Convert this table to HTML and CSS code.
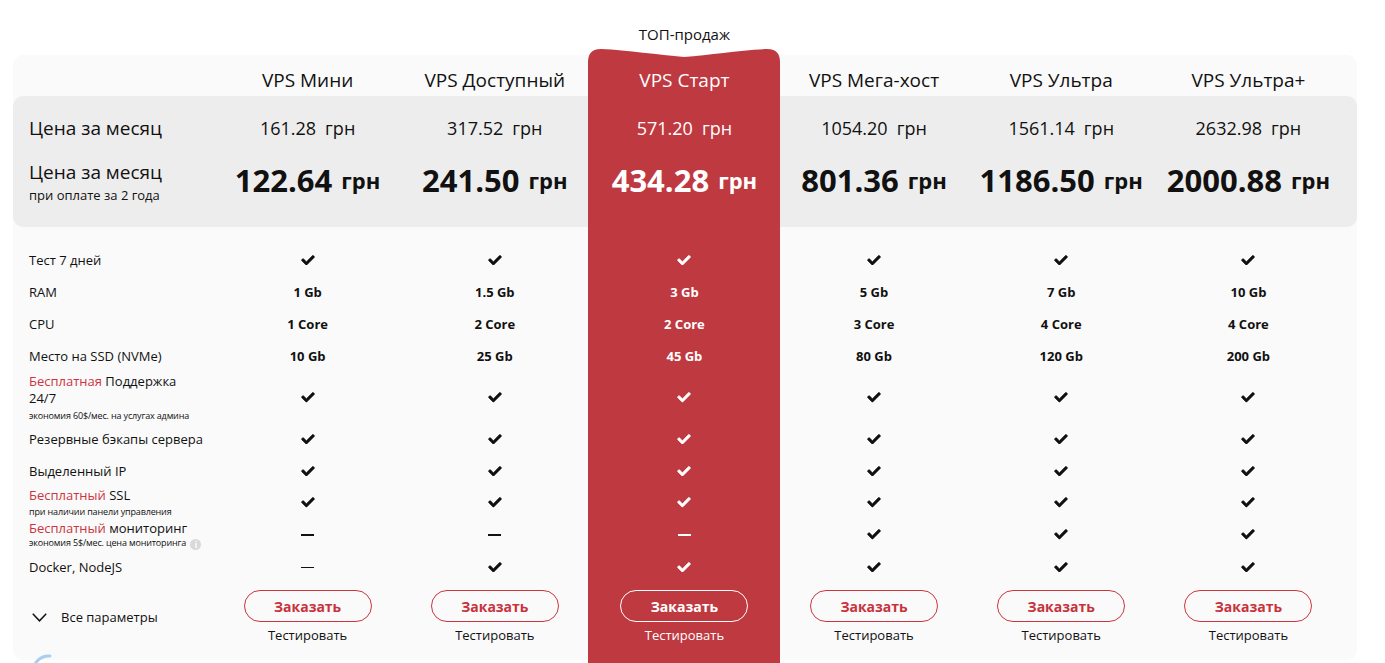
FILE: index.html
```html
<!DOCTYPE html>
<html lang="ru">
<head>
<meta charset="utf-8">
<title>VPS тарифы</title>
<link rel="stylesheet" href="styles.css">
</head>
<body>
<div class="page">
  <div class="card">
    <!-- labels column -->
    <div class="col labels">
      <div class="name"></div>
      <div class="band band-left">
        <div class="p1"><span class="lbl-big">Цена за месяц</span></div>
        <div class="p2 p2-label">
          <span class="lbl-big">Цена за месяц</span>
          <span class="lbl-sub">при оплате за 2 года</span>
        </div>
      </div>
      <div class="gap"></div>
      <div class="row h32"><span>Тест 7 дней</span></div>
      <div class="row h32"><span>RAM</span></div>
      <div class="row h32"><span>CPU</span></div>
      <div class="row h32"><span>Место на SSD (NVMe)</span></div>
      <div class="row h51 multi">
        <span class="l17"><span class="red">Бесплатная</span> Поддержка<br>24/7</span>
        <span class="tiny tiny-gap">экономия 60$/мес. на услугах админа</span>
      </div>
      <div class="row h32"><span>Резервные бэкапы сервера</span></div>
      <div class="row h32"><span>Выделенный IP</span></div>
      <div class="row h31 multi">
        <span><span class="red">Бесплатный</span> SSL</span>
        <span class="tiny tiny-gap">при наличии панели управления</span>
      </div>
      <div class="row h33 multi">
        <span><span class="red">Бесплатный</span> мониторинг</span>
        <span class="tiny">экономия 5$/мес. цена мониторинга <i class="info">i</i></span>
      </div>
      <div class="row h32"><span>Docker, NodeJS</span></div>
      <div class="foot foot-label">
        <div class="more">
          <svg class="chev" width="15" height="9" viewBox="0 0 15 9"><polyline points="0.8,0.8 7.5,7.8 14.2,0.8" fill="none" stroke="#111" stroke-width="1.5"/></svg>
          <span>Все параметры</span>
        </div>
      </div>
    </div>

    <!-- plan 1 -->
    <div class="col plan">
      <div class="name">VPS Мини</div>
      <div class="band">
        <div class="p1"><span>161.28</span><span class="cur">грн</span></div>
        <div class="p2"><span class="big">122.64</span><span class="bigcur">грн</span></div>
      </div>
      <div class="gap"></div>
      <div class="row h32"><svg class="ok" viewBox="-20 -20 552 410"><path d="M173.9 367.4L7.5 201c-10-10-10-26.2 0-36.2l36.2-36.2c10-10 26.2-10 36.2 0L192 240.7 432.1 0.6c10-10 26.2-10 36.2 0l36.2 36.2c10 10 10 26.2 0 36.2l-294.4 294.4c-10 10-26.2 10-36.2 0z"/></svg></div>
      <div class="row h32 val">1 Gb</div>
      <div class="row h32 val">1 Core</div>
      <div class="row h32 val">10 Gb</div>
      <div class="row h51"><svg class="ok" viewBox="-20 -20 552 410"><path d="M173.9 367.4L7.5 201c-10-10-10-26.2 0-36.2l36.2-36.2c10-10 26.2-10 36.2 0L192 240.7 432.1 0.6c10-10 26.2-10 36.2 0l36.2 36.2c10 10 10 26.2 0 36.2l-294.4 294.4c-10 10-26.2 10-36.2 0z"/></svg></div>
      <div class="row h32"><svg class="ok" viewBox="-20 -20 552 410"><path d="M173.9 367.4L7.5 201c-10-10-10-26.2 0-36.2l36.2-36.2c10-10 26.2-10 36.2 0L192 240.7 432.1 0.6c10-10 26.2-10 36.2 0l36.2 36.2c10 10 10 26.2 0 36.2l-294.4 294.4c-10 10-26.2 10-36.2 0z"/></svg></div>
      <div class="row h32"><svg class="ok" viewBox="-20 -20 552 410"><path d="M173.9 367.4L7.5 201c-10-10-10-26.2 0-36.2l36.2-36.2c10-10 26.2-10 36.2 0L192 240.7 432.1 0.6c10-10 26.2-10 36.2 0l36.2 36.2c10 10 10 26.2 0 36.2l-294.4 294.4c-10 10-26.2 10-36.2 0z"/></svg></div>
      <div class="row h31"><svg class="ok" viewBox="-20 -20 552 410"><path d="M173.9 367.4L7.5 201c-10-10-10-26.2 0-36.2l36.2-36.2c10-10 26.2-10 36.2 0L192 240.7 432.1 0.6c10-10 26.2-10 36.2 0l36.2 36.2c10 10 10 26.2 0 36.2l-294.4 294.4c-10 10-26.2 10-36.2 0z"/></svg></div>
      <div class="row h33"><span class="dash"></span></div>
      <div class="row h32"><span class="dash"></span></div>
      <div class="foot"><a class="btn">Заказать</a><span class="test">Тестировать</span></div>
    </div>

    <!-- plan 2 -->
    <div class="col plan">
      <div class="name">VPS Доступный</div>
      <div class="band">
        <div class="p1"><span>317.52</span><span class="cur">грн</span></div>
        <div class="p2"><span class="big">241.50</span><span class="bigcur">грн</span></div>
      </div>
      <div class="gap"></div>
      <div class="row h32"><svg class="ok" viewBox="-20 -20 552 410"><path d="M173.9 367.4L7.5 201c-10-10-10-26.2 0-36.2l36.2-36.2c10-10 26.2-10 36.2 0L192 240.7 432.1 0.6c10-10 26.2-10 36.2 0l36.2 36.2c10 10 10 26.2 0 36.2l-294.4 294.4c-10 10-26.2 10-36.2 0z"/></svg></div>
      <div class="row h32 val">1.5 Gb</div>
      <div class="row h32 val">2 Core</div>
      <div class="row h32 val">25 Gb</div>
      <div class="row h51"><svg class="ok" viewBox="-20 -20 552 410"><path d="M173.9 367.4L7.5 201c-10-10-10-26.2 0-36.2l36.2-36.2c10-10 26.2-10 36.2 0L192 240.7 432.1 0.6c10-10 26.2-10 36.2 0l36.2 36.2c10 10 10 26.2 0 36.2l-294.4 294.4c-10 10-26.2 10-36.2 0z"/></svg></div>
      <div class="row h32"><svg class="ok" viewBox="-20 -20 552 410"><path d="M173.9 367.4L7.5 201c-10-10-10-26.2 0-36.2l36.2-36.2c10-10 26.2-10 36.2 0L192 240.7 432.1 0.6c10-10 26.2-10 36.2 0l36.2 36.2c10 10 10 26.2 0 36.2l-294.4 294.4c-10 10-26.2 10-36.2 0z"/></svg></div>
      <div class="row h32"><svg class="ok" viewBox="-20 -20 552 410"><path d="M173.9 367.4L7.5 201c-10-10-10-26.2 0-36.2l36.2-36.2c10-10 26.2-10 36.2 0L192 240.7 432.1 0.6c10-10 26.2-10 36.2 0l36.2 36.2c10 10 10 26.2 0 36.2l-294.4 294.4c-10 10-26.2 10-36.2 0z"/></svg></div>
      <div class="row h31"><svg class="ok" viewBox="-20 -20 552 410"><path d="M173.9 367.4L7.5 201c-10-10-10-26.2 0-36.2l36.2-36.2c10-10 26.2-10 36.2 0L192 240.7 432.1 0.6c10-10 26.2-10 36.2 0l36.2 36.2c10 10 10 26.2 0 36.2l-294.4 294.4c-10 10-26.2 10-36.2 0z"/></svg></div>
      <div class="row h33"><span class="dash"></span></div>
      <div class="row h32"><svg class="ok" viewBox="-20 -20 552 410"><path d="M173.9 367.4L7.5 201c-10-10-10-26.2 0-36.2l36.2-36.2c10-10 26.2-10 36.2 0L192 240.7 432.1 0.6c10-10 26.2-10 36.2 0l36.2 36.2c10 10 10 26.2 0 36.2l-294.4 294.4c-10 10-26.2 10-36.2 0z"/></svg></div>
      <div class="foot"><a class="btn">Заказать</a><span class="test">Тестировать</span></div>
    </div>

    <!-- plan 3 featured -->
    <div class="col plan featured">
      <svg class="cap" width="192" height="14" viewBox="0 0 192 14"><path d="M0 14 L0 13 Q0 0 13 0 C40 1 70 6 96 8 C122 6 152 1 179 0 Q192 0 192 13 L192 14 Z" fill="#bf3941"/></svg>
      <span class="top-label">ТОП-продаж</span>
      <div class="name">VPS Старт</div>
      <div class="band">
        <div class="p1"><span>571.20</span><span class="cur">грн</span></div>
        <div class="p2"><span class="big">434.28</span><span class="bigcur">грн</span></div>
      </div>
      <div class="gap"></div>
      <div class="row h32"><svg class="ok" viewBox="-20 -20 552 410"><path d="M173.9 367.4L7.5 201c-10-10-10-26.2 0-36.2l36.2-36.2c10-10 26.2-10 36.2 0L192 240.7 432.1 0.6c10-10 26.2-10 36.2 0l36.2 36.2c10 10 10 26.2 0 36.2l-294.4 294.4c-10 10-26.2 10-36.2 0z"/></svg></div>
      <div class="row h32 val">3 Gb</div>
      <div class="row h32 val">2 Core</div>
      <div class="row h32 val">45 Gb</div>
      <div class="row h51"><svg class="ok" viewBox="-20 -20 552 410"><path d="M173.9 367.4L7.5 201c-10-10-10-26.2 0-36.2l36.2-36.2c10-10 26.2-10 36.2 0L192 240.7 432.1 0.6c10-10 26.2-10 36.2 0l36.2 36.2c10 10 10 26.2 0 36.2l-294.4 294.4c-10 10-26.2 10-36.2 0z"/></svg></div>
      <div class="row h32"><svg class="ok" viewBox="-20 -20 552 410"><path d="M173.9 367.4L7.5 201c-10-10-10-26.2 0-36.2l36.2-36.2c10-10 26.2-10 36.2 0L192 240.7 432.1 0.6c10-10 26.2-10 36.2 0l36.2 36.2c10 10 10 26.2 0 36.2l-294.4 294.4c-10 10-26.2 10-36.2 0z"/></svg></div>
      <div class="row h32"><svg class="ok" viewBox="-20 -20 552 410"><path d="M173.9 367.4L7.5 201c-10-10-10-26.2 0-36.2l36.2-36.2c10-10 26.2-10 36.2 0L192 240.7 432.1 0.6c10-10 26.2-10 36.2 0l36.2 36.2c10 10 10 26.2 0 36.2l-294.4 294.4c-10 10-26.2 10-36.2 0z"/></svg></div>
      <div class="row h31"><svg class="ok" viewBox="-20 -20 552 410"><path d="M173.9 367.4L7.5 201c-10-10-10-26.2 0-36.2l36.2-36.2c10-10 26.2-10 36.2 0L192 240.7 432.1 0.6c10-10 26.2-10 36.2 0l36.2 36.2c10 10 10 26.2 0 36.2l-294.4 294.4c-10 10-26.2 10-36.2 0z"/></svg></div>
      <div class="row h33"><span class="dash"></span></div>
      <div class="row h32"><svg class="ok" viewBox="-20 -20 552 410"><path d="M173.9 367.4L7.5 201c-10-10-10-26.2 0-36.2l36.2-36.2c10-10 26.2-10 36.2 0L192 240.7 432.1 0.6c10-10 26.2-10 36.2 0l36.2 36.2c10 10 10 26.2 0 36.2l-294.4 294.4c-10 10-26.2 10-36.2 0z"/></svg></div>
      <div class="foot"><a class="btn">Заказать</a><span class="test">Тестировать</span></div>
    </div>

    <!-- plan 4 -->
    <div class="col plan">
      <div class="name">VPS Мега-хост</div>
      <div class="band">
        <div class="p1"><span>1054.20</span><span class="cur">грн</span></div>
        <div class="p2"><span class="big">801.36</span><span class="bigcur">грн</span></div>
      </div>
      <div class="gap"></div>
      <div class="row h32"><svg class="ok" viewBox="-20 -20 552 410"><path d="M173.9 367.4L7.5 201c-10-10-10-26.2 0-36.2l36.2-36.2c10-10 26.2-10 36.2 0L192 240.7 432.1 0.6c10-10 26.2-10 36.2 0l36.2 36.2c10 10 10 26.2 0 36.2l-294.4 294.4c-10 10-26.2 10-36.2 0z"/></svg></div>
      <div class="row h32 val">5 Gb</div>
      <div class="row h32 val">3 Core</div>
      <div class="row h32 val">80 Gb</div>
      <div class="row h51"><svg class="ok" viewBox="-20 -20 552 410"><path d="M173.9 367.4L7.5 201c-10-10-10-26.2 0-36.2l36.2-36.2c10-10 26.2-10 36.2 0L192 240.7 432.1 0.6c10-10 26.2-10 36.2 0l36.2 36.2c10 10 10 26.2 0 36.2l-294.4 294.4c-10 10-26.2 10-36.2 0z"/></svg></div>
      <div class="row h32"><svg class="ok" viewBox="-20 -20 552 410"><path d="M173.9 367.4L7.5 201c-10-10-10-26.2 0-36.2l36.2-36.2c10-10 26.2-10 36.2 0L192 240.7 432.1 0.6c10-10 26.2-10 36.2 0l36.2 36.2c10 10 10 26.2 0 36.2l-294.4 294.4c-10 10-26.2 10-36.2 0z"/></svg></div>
      <div class="row h32"><svg class="ok" viewBox="-20 -20 552 410"><path d="M173.9 367.4L7.5 201c-10-10-10-26.2 0-36.2l36.2-36.2c10-10 26.2-10 36.2 0L192 240.7 432.1 0.6c10-10 26.2-10 36.2 0l36.2 36.2c10 10 10 26.2 0 36.2l-294.4 294.4c-10 10-26.2 10-36.2 0z"/></svg></div>
      <div class="row h31"><svg class="ok" viewBox="-20 -20 552 410"><path d="M173.9 367.4L7.5 201c-10-10-10-26.2 0-36.2l36.2-36.2c10-10 26.2-10 36.2 0L192 240.7 432.1 0.6c10-10 26.2-10 36.2 0l36.2 36.2c10 10 10 26.2 0 36.2l-294.4 294.4c-10 10-26.2 10-36.2 0z"/></svg></div>
      <div class="row h33"><svg class="ok" viewBox="-20 -20 552 410"><path d="M173.9 367.4L7.5 201c-10-10-10-26.2 0-36.2l36.2-36.2c10-10 26.2-10 36.2 0L192 240.7 432.1 0.6c10-10 26.2-10 36.2 0l36.2 36.2c10 10 10 26.2 0 36.2l-294.4 294.4c-10 10-26.2 10-36.2 0z"/></svg></div>
      <div class="row h32"><svg class="ok" viewBox="-20 -20 552 410"><path d="M173.9 367.4L7.5 201c-10-10-10-26.2 0-36.2l36.2-36.2c10-10 26.2-10 36.2 0L192 240.7 432.1 0.6c10-10 26.2-10 36.2 0l36.2 36.2c10 10 10 26.2 0 36.2l-294.4 294.4c-10 10-26.2 10-36.2 0z"/></svg></div>
      <div class="foot"><a class="btn">Заказать</a><span class="test">Тестировать</span></div>
    </div>

    <!-- plan 5 -->
    <div class="col plan">
      <div class="name">VPS Ультра</div>
      <div class="band">
        <div class="p1"><span>1561.14</span><span class="cur">грн</span></div>
        <div class="p2"><span class="big">1186.50</span><span class="bigcur">грн</span></div>
      </div>
      <div class="gap"></div>
      <div class="row h32"><svg class="ok" viewBox="-20 -20 552 410"><path d="M173.9 367.4L7.5 201c-10-10-10-26.2 0-36.2l36.2-36.2c10-10 26.2-10 36.2 0L192 240.7 432.1 0.6c10-10 26.2-10 36.2 0l36.2 36.2c10 10 10 26.2 0 36.2l-294.4 294.4c-10 10-26.2 10-36.2 0z"/></svg></div>
      <div class="row h32 val">7 Gb</div>
      <div class="row h32 val">4 Core</div>
      <div class="row h32 val">120 Gb</div>
      <div class="row h51"><svg class="ok" viewBox="-20 -20 552 410"><path d="M173.9 367.4L7.5 201c-10-10-10-26.2 0-36.2l36.2-36.2c10-10 26.2-10 36.2 0L192 240.7 432.1 0.6c10-10 26.2-10 36.2 0l36.2 36.2c10 10 10 26.2 0 36.2l-294.4 294.4c-10 10-26.2 10-36.2 0z"/></svg></div>
      <div class="row h32"><svg class="ok" viewBox="-20 -20 552 410"><path d="M173.9 367.4L7.5 201c-10-10-10-26.2 0-36.2l36.2-36.2c10-10 26.2-10 36.2 0L192 240.7 432.1 0.6c10-10 26.2-10 36.2 0l36.2 36.2c10 10 10 26.2 0 36.2l-294.4 294.4c-10 10-26.2 10-36.2 0z"/></svg></div>
      <div class="row h32"><svg class="ok" viewBox="-20 -20 552 410"><path d="M173.9 367.4L7.5 201c-10-10-10-26.2 0-36.2l36.2-36.2c10-10 26.2-10 36.2 0L192 240.7 432.1 0.6c10-10 26.2-10 36.2 0l36.2 36.2c10 10 10 26.2 0 36.2l-294.4 294.4c-10 10-26.2 10-36.2 0z"/></svg></div>
      <div class="row h31"><svg class="ok" viewBox="-20 -20 552 410"><path d="M173.9 367.4L7.5 201c-10-10-10-26.2 0-36.2l36.2-36.2c10-10 26.2-10 36.2 0L192 240.7 432.1 0.6c10-10 26.2-10 36.2 0l36.2 36.2c10 10 10 26.2 0 36.2l-294.4 294.4c-10 10-26.2 10-36.2 0z"/></svg></div>
      <div class="row h33"><svg class="ok" viewBox="-20 -20 552 410"><path d="M173.9 367.4L7.5 201c-10-10-10-26.2 0-36.2l36.2-36.2c10-10 26.2-10 36.2 0L192 240.7 432.1 0.6c10-10 26.2-10 36.2 0l36.2 36.2c10 10 10 26.2 0 36.2l-294.4 294.4c-10 10-26.2 10-36.2 0z"/></svg></div>
      <div class="row h32"><svg class="ok" viewBox="-20 -20 552 410"><path d="M173.9 367.4L7.5 201c-10-10-10-26.2 0-36.2l36.2-36.2c10-10 26.2-10 36.2 0L192 240.7 432.1 0.6c10-10 26.2-10 36.2 0l36.2 36.2c10 10 10 26.2 0 36.2l-294.4 294.4c-10 10-26.2 10-36.2 0z"/></svg></div>
      <div class="foot"><a class="btn">Заказать</a><span class="test">Тестировать</span></div>
    </div>

    <!-- plan 6 -->
    <div class="col plan">
      <div class="name">VPS Ультра+</div>
      <div class="band">
        <div class="p1"><span>2632.98</span><span class="cur">грн</span></div>
        <div class="p2"><span class="big">2000.88</span><span class="bigcur">грн</span></div>
      </div>
      <div class="gap"></div>
      <div class="row h32"><svg class="ok" viewBox="-20 -20 552 410"><path d="M173.9 367.4L7.5 201c-10-10-10-26.2 0-36.2l36.2-36.2c10-10 26.2-10 36.2 0L192 240.7 432.1 0.6c10-10 26.2-10 36.2 0l36.2 36.2c10 10 10 26.2 0 36.2l-294.4 294.4c-10 10-26.2 10-36.2 0z"/></svg></div>
      <div class="row h32 val">10 Gb</div>
      <div class="row h32 val">4 Core</div>
      <div class="row h32 val">200 Gb</div>
      <div class="row h51"><svg class="ok" viewBox="-20 -20 552 410"><path d="M173.9 367.4L7.5 201c-10-10-10-26.2 0-36.2l36.2-36.2c10-10 26.2-10 36.2 0L192 240.7 432.1 0.6c10-10 26.2-10 36.2 0l36.2 36.2c10 10 10 26.2 0 36.2l-294.4 294.4c-10 10-26.2 10-36.2 0z"/></svg></div>
      <div class="row h32"><svg class="ok" viewBox="-20 -20 552 410"><path d="M173.9 367.4L7.5 201c-10-10-10-26.2 0-36.2l36.2-36.2c10-10 26.2-10 36.2 0L192 240.7 432.1 0.6c10-10 26.2-10 36.2 0l36.2 36.2c10 10 10 26.2 0 36.2l-294.4 294.4c-10 10-26.2 10-36.2 0z"/></svg></div>
      <div class="row h32"><svg class="ok" viewBox="-20 -20 552 410"><path d="M173.9 367.4L7.5 201c-10-10-10-26.2 0-36.2l36.2-36.2c10-10 26.2-10 36.2 0L192 240.7 432.1 0.6c10-10 26.2-10 36.2 0l36.2 36.2c10 10 10 26.2 0 36.2l-294.4 294.4c-10 10-26.2 10-36.2 0z"/></svg></div>
      <div class="row h31"><svg class="ok" viewBox="-20 -20 552 410"><path d="M173.9 367.4L7.5 201c-10-10-10-26.2 0-36.2l36.2-36.2c10-10 26.2-10 36.2 0L192 240.7 432.1 0.6c10-10 26.2-10 36.2 0l36.2 36.2c10 10 10 26.2 0 36.2l-294.4 294.4c-10 10-26.2 10-36.2 0z"/></svg></div>
      <div class="row h33"><svg class="ok" viewBox="-20 -20 552 410"><path d="M173.9 367.4L7.5 201c-10-10-10-26.2 0-36.2l36.2-36.2c10-10 26.2-10 36.2 0L192 240.7 432.1 0.6c10-10 26.2-10 36.2 0l36.2 36.2c10 10 10 26.2 0 36.2l-294.4 294.4c-10 10-26.2 10-36.2 0z"/></svg></div>
      <div class="row h32"><svg class="ok" viewBox="-20 -20 552 410"><path d="M173.9 367.4L7.5 201c-10-10-10-26.2 0-36.2l36.2-36.2c10-10 26.2-10 36.2 0L192 240.7 432.1 0.6c10-10 26.2-10 36.2 0l36.2 36.2c10 10 10 26.2 0 36.2l-294.4 294.4c-10 10-26.2 10-36.2 0z"/></svg></div>
      <div class="foot"><a class="btn">Заказать</a><span class="test">Тестировать</span></div>
    </div>

    <!-- right edge column -->
    <div class="col edge">
      <div class="name"></div>
      <div class="band band-right"></div>
    </div>
  </div>
  <svg class="spinner" width="40" height="40" viewBox="0 0 40 40"><path d="M5 24 A16 16 0 0 1 22 6" fill="none" stroke="#a9cdf3" stroke-width="3" stroke-linecap="round"/></svg>
</div>
</body>
</html>
```

FILE: styles.css
```css
html, body {
  margin: 0;
  padding: 0;
  overflow: hidden;
  background: #ffffff;
}

body {
  font-family: "Open Sans", "Noto Sans", sans-serif;
  color: #111111;
}

.page {
  position: relative;
  padding-top: 55px;
  height: 608px;
}

.card {
  display: flex;
  width: 1344px;
  margin-left: 13px;
  background: #fafafa;
  border-radius: 10px;
}

.col {
  display: flex;
  flex-direction: column;
}

.labels {
  flex: 0 0 201px;
}

.plan {
  flex: 1 1 0;
  min-width: 0;
  align-items: stretch;
  text-align: center;
}

.edge {
  flex: 0 0 15px;
}

.name {
  height: 41px;
  box-sizing: border-box;
  padding-top: 12px;
  font-size: 19px;
  line-height: 26px;
  white-space: nowrap;
}

.band {
  height: 131px;
  background: #ededed;
}

.band-left {
  border-radius: 10px 0 0 10px;
}

.band-right {
  border-radius: 0 10px 10px 0;
}

.p1 {
  height: 64px;
  display: flex;
  align-items: center;
  justify-content: center;
  font-size: 18px;
  white-space: nowrap;
}

.p2 {
  height: 67px;
  display: flex;
  align-items: flex-start;
  justify-content: center;
  white-space: nowrap;
}

.labels .p1 {
  justify-content: flex-start;
  padding-left: 16px;
}

.p2-label {
  flex-direction: column;
  justify-content: flex-start;
  padding-left: 16px;
}

.lbl-big {
  font-size: 19px;
  line-height: 24px;
}

.lbl-sub {
  font-size: 13px;
  line-height: 18px;
  margin-top: 2px;
}

.cur {
  margin-left: 9px;
}

.big {
  font-size: 31px;
  line-height: 40px;
  font-weight: 700;
}

.bigcur {
  font-size: 22px;
  line-height: 40px;
  font-weight: 700;
  margin-left: 9px;
}

.gap {
  height: 17px;
}

.row {
  display: flex;
  align-items: center;
  justify-content: center;
  font-size: 13px;
  line-height: 16px;
  white-space: nowrap;
}

.labels .row {
  justify-content: flex-start;
  padding-left: 16px;
}

.labels .multi {
  flex-direction: column;
  align-items: flex-start;
  justify-content: center;
}

.h32 { height: 32px; }
.h51 { height: 51px; }
.h31 { height: 31px; }
.h33 { height: 33px; }

.l17 {
  line-height: 17px;
}

.tiny {
  font-size: 9px;
  line-height: 12px;
  letter-spacing: -0.15px;
  margin-top: 1px;
}

.tiny-gap {
  margin-top: 3px;
}

.red {
  color: #cc3440;
}

.info {
  display: inline-block;
  width: 11px;
  height: 11px;
  border-radius: 50%;
  background: #d9d9d9;
  color: #ffffff;
  font-style: normal;
  font-weight: 700;
  font-size: 8px;
  line-height: 11px;
  text-align: center;
  vertical-align: -2px;
  margin-left: 2px;
}

.val {
  font-weight: 700;
}

.ok {
  width: 14px;
  height: 10.5px;
  fill: #111111;
  stroke: #111111;
  stroke-width: 22;
  stroke-linejoin: round;
}

.dash {
  display: block;
  width: 13px;
  height: 1.5px;
  background: #111111;
  margin-top: 1px;
}

.foot {
  height: 77px;
  display: flex;
  flex-direction: column;
  align-items: center;
}

.btn {
  display: flex;
  align-items: center;
  justify-content: center;
  box-sizing: border-box;
  width: 128px;
  height: 32px;
  margin-top: 7px;
  border: 1px solid #cc3440;
  border-radius: 16px;
  color: #c8323d;
  font-size: 14px;
  font-weight: 700;
  cursor: pointer;
}

.test {
  margin-top: 4px;
  font-size: 13px;
  line-height: 18px;
}

.foot-label {
  align-items: flex-start;
}

.more {
  display: flex;
  align-items: center;
  height: 32px;
  margin-top: 18px;
  padding-left: 19px;
  font-size: 13px;
}

.chev {
  margin-right: 14px;
}

.featured {
  flex: 0 0 192px;
  position: relative;
  margin-bottom: -30px;
  background: linear-gradient(to bottom, transparent 8px, #bf3941 8px);
  color: #ffffff;
}

.featured .band {
  background: transparent;
}

.featured .ok {
  fill: #ffffff;
  stroke: #ffffff;
}

.featured .dash {
  background: #ffffff;
}

.featured .btn {
  border-color: #ffffff;
  color: #ffffff;
}

.cap {
  position: absolute;
  top: -6px;
  left: 0;
  display: block;
}

.top-label {
  position: absolute;
  top: -31px;
  left: 0;
  right: 0;
  text-align: center;
  font-size: 15px;
  line-height: 20px;
  color: #111111;
}

.featured .name {
  position: relative;
}

.spinner {
  position: absolute;
  left: 28px;
  top: 650px;
}
```
